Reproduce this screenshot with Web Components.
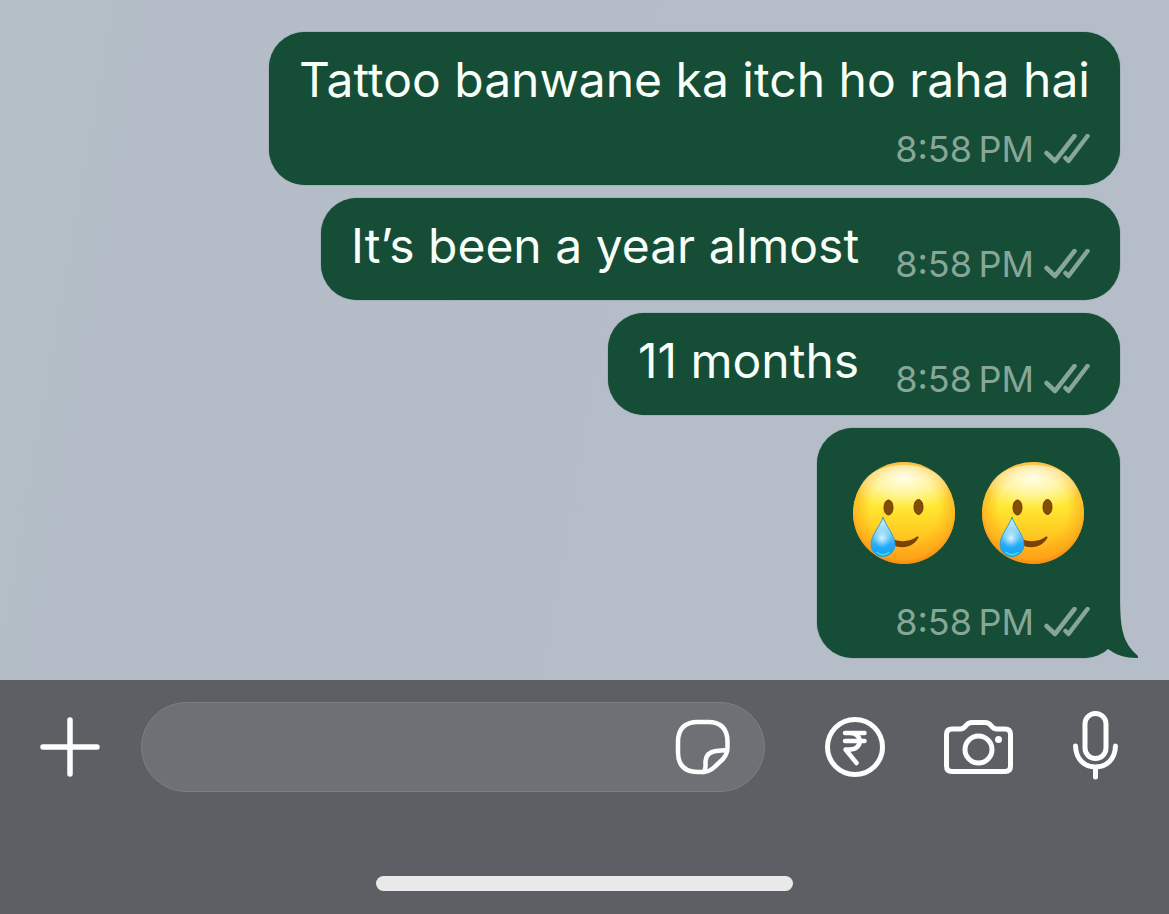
<!DOCTYPE html>
<html lang="en">
<head>
<meta charset="utf-8">
<meta name="viewport" content="width=device-width, initial-scale=1">
<title>Chat</title>
<style>
    body {
        margin: 0;
        font-family: Inter, "Liberation Sans", sans-serif;
        background: #5c6065;
    }
</style>
</head>
<body>
<chat-screen>
    <chat-bubble time="8:58&#8239;PM" stacked>Tattoo banwane ka itch ho raha hai</chat-bubble>
    <chat-bubble time="8:58&#8239;PM">It’s been a year almost</chat-bubble>
    <chat-bubble time="8:58&#8239;PM">11 months</chat-bubble>
    <chat-bubble time="8:58&#8239;PM" stacked tail>
        <tear-emoji></tear-emoji><tear-emoji></tear-emoji>
    </chat-bubble>
    <chat-composer slot="footer"></chat-composer>
</chat-screen>

<script>
class ChatScreen extends HTMLElement {

    constructor() {
        super();
        this.attachShadow({mode:"open"}).innerHTML =
        `
        <style>
        :host {
            display: flex;
            flex-direction: column;
            min-height: 100vh;
        }

        main {
            flex: 1;
            display: flex;
            flex-direction: column;
            align-items: flex-end;
            gap: 13px;
            padding: 32px 49px 22px 24px;
            background: linear-gradient(100deg, #b4bec7, #b4bdc8 60%, #b5bdc8);
        }
        </style>

        <main><slot></slot></main>
        <slot name="footer"></slot>
        `
    }
}

class ChatBubble extends HTMLElement {

    constructor() {
        super();
        this._shadowDOM = this.attachShadow({mode:"open"})
    }

    connectedCallback() {
        this.render();
    }

    render() {
        this._shadowDOM.innerHTML =
        `
        <style>
        :host {
            display: flex;
            align-items: flex-end;
            gap: 7px 36px;
            position: relative;
            padding: 18px 30px 14px;
            border-radius: 36px;
            background: #154d37;
            box-shadow: 0 0 1px #154d37;
            color: #f8fff9;
        }

        :host([stacked]) {
            flex-direction: column;
        }

        .text {
            padding-bottom: 10px;
            font-size: 48px;
            line-height: 60px;
        }

        :host([tail]) .text {
            display: flex;
            gap: 25px;
            padding: 15px 5px 28px;
        }

        .meta {
            display: flex;
            align-items: center;
            gap: 10px;
            color: #87a698;
            font-size: 36px;
            line-height: 44px;
            white-space: nowrap;
        }

        .meta svg {
            display: block;
        }

        .tail {
            position: absolute;
            right: -20px;
            bottom: 0;
        }
        </style>

        <div class="text"><slot></slot></div>
        <div class="meta">
            <time>${this.getAttribute("time")}</time>
            <svg width="46" height="30" viewBox="0 0 46 30" role="img" aria-label="Delivered" fill="none" stroke="currentColor" stroke-width="4.500" stroke-linecap="round" stroke-linejoin="round">
                <path d="M2.500 19L11 27L30.500 2"/>
                <path d="M21.500 24L24.500 27L43.500 2"/>
            </svg>
        </div>
        ${this.hasAttribute("tail") ? `
        <svg class="tail" width="36" height="60" viewBox="0 0 36 60" aria-hidden="true">
            <path fill="#154d37" d="M0 0H16C16 36 21 46 33.500 57.500Q35 59.500 33 60C21 60 12 57 4 51L0 50Z"/>
        </svg>` : ""}
        `
    }
}

class TearEmoji extends HTMLElement {

    constructor() {
        super();
        this.attachShadow({mode:"open"}).innerHTML =
        `
        <style>
        :host {
            display: block;
        }

        svg {
            display: block;
        }
        </style>

        <svg width="104" height="104" viewBox="0 0 104 104" role="img" aria-label="Smiling face with tear">
            <defs>
                <linearGradient id="face" x1="0" y1="0" x2="0" y2="1">
                    <stop offset="0" stop-color="#ffdf6a"/>
                    <stop offset=".2" stop-color="#fff06c"/>
                    <stop offset=".42" stop-color="#ffe932"/>
                    <stop offset=".65" stop-color="#ffd025"/>
                    <stop offset="1" stop-color="#ffa016"/>
                </linearGradient>
                <radialGradient id="rim" cx=".5" cy=".46" r=".54">
                    <stop offset=".62" stop-color="#fda414" stop-opacity="0"/>
                    <stop offset=".9" stop-color="#fda01a" stop-opacity=".6"/>
                    <stop offset="1" stop-color="#f08a14" stop-opacity=".9"/>
                </radialGradient>
                <radialGradient id="shine" cx=".5" cy=".25" r=".65">
                    <stop offset="0" stop-color="#fff" stop-opacity=".85"/>
                    <stop offset=".5" stop-color="#fffde0" stop-opacity=".5"/>
                    <stop offset="1" stop-color="#fff8a0" stop-opacity="0"/>
                </radialGradient>
                <linearGradient id="tear" x1="0" y1="0" x2="0" y2="1">
                    <stop offset="0" stop-color="#d9f4fc"/>
                    <stop offset=".35" stop-color="#8fd6f5"/>
                    <stop offset=".7" stop-color="#26aafa"/>
                    <stop offset="1" stop-color="#12a5f4"/>
                </linearGradient>
                <radialGradient id="glow">
                    <stop offset="0" stop-color="#e5faff" stop-opacity=".9"/>
                    <stop offset="1" stop-color="#bdecff" stop-opacity="0"/>
                </radialGradient>
            </defs>
            <circle cx="52" cy="52" r="51" fill="url(#face)"/>
            <circle cx="52" cy="52" r="51" fill="url(#rim)"/>
            <ellipse cx="52" cy="30" rx="44" ry="26" fill="url(#shine)"/>
            <g fill="#854c08" stroke="#6f3d05">
                <ellipse cx="36.500" cy="46.500" rx="4.500" ry="7.500"/>
                <ellipse cx="66.500" cy="46" rx="4.500" ry="7.500"/>
            </g>
            <path d="M41 78C50 82 59 80 65 75.500Q67.500 75 66 77.500C60 87 49 88 41 84Z" fill="#7a4305"/>
            <path d="M31 56C33 64 43 74 43 83.500A12 12 0 0 1 19 83.500C19 74 29 64 31 56Z" fill="url(#tear)" stroke="#2a9fd8"/>
            <ellipse cx="30" cy="77" rx="9" ry="10" fill="url(#glow)"/>
            <path d="M25 91.500Q31 96 37 91.500" fill="none" stroke="#48dcf5" stroke-width="1.500" stroke-linecap="round"/>
        </svg>
        `
    }
}

class ChatComposer extends HTMLElement {

    constructor() {
        super();
        this.attachShadow({mode:"open"}).innerHTML =
        `
        <style>
        :host {
            display: block;
            padding: 22px 0 23px;
            background: #5c6065;
            color: #fcfdfd;
        }

        .bar, .actions, .field {
            display: flex;
            align-items: center;
        }

        .bar {
            gap: 41px;
            padding: 0 48px 0 40px;
        }

        .field {
            flex: 1;
            min-width: 0;
            box-sizing: border-box;
            height: 90px;
            padding: 0 32px 0 40px;
            border: 1px solid #7b7f83;
            border-radius: 45px;
            background: #6d7175;
        }

        input {
            flex: 1;
            min-width: 0;
            padding: 0;
            border: 0;
            outline: 0;
            background: none;
            color: inherit;
            font: inherit;
            font-size: 48px;
        }

        .actions {
            gap: 59px;
            padding-left: 19px;
        }

        button {
            padding: 0;
            border: 0;
            background: none;
            color: inherit;
            cursor: pointer;
        }

        svg {
            display: block;
            fill: none;
            stroke: currentColor;
            stroke-width: 5;
            stroke-linecap: round;
            stroke-linejoin: round;
        }

        .home {
            width: 417px;
            max-width: 60%;
            height: 15px;
            margin: 84px auto 0;
            border-radius: 8px;
            background: #e9e9e9;
        }
        </style>

        <div class="bar">
            <button type="button" aria-label="Attach">
                <svg width="60" height="60" viewBox="0 0 60 60"><path d="M30 3V57M3 30H57" stroke-width="5.500"/></svg>
            </button>
            <div class="field">
                <input type="text" aria-label="Message">
                <button type="button" aria-label="Stickers">
                    <svg width="58" height="58" viewBox="0 0 58 58">
                        <g stroke-width="4.500">
                            <path d="M24 4H34C47 4 53.500 10.500 53.500 24V29C53.500 34 52.500 37 49 41L41 48.500C37 52.500 34 54 29 54H24C10.500 54 4 47.500 4 34V24C4 10.500 10.500 4 24 4Z"/>
                            <path d="M53 32L42 33C35 34 32 37 31.500 43V48Q31.500 51 30 54"/>
                        </g>
                    </svg>
                </button>
            </div>
            <div class="actions">
                <button type="button" aria-label="Payment">
                    <svg width="60" height="60" viewBox="0 0 60 60">
                        <circle cx="30" cy="30" r="27.500"/>
                        <path d="M20 16H39.500M20 24H39.500M25 16C38 16 38 32.500 25 32.500H20.500L31.500 46" stroke-width="4.500"/>
                    </svg>
                </button>
                <button type="button" aria-label="Camera">
                    <svg width="70" height="60" viewBox="0 0 70 60">
                        <path d="M8 12H16C19 12 20.500 10.500 22 8.500C24 6 25.500 5.500 28 5.500H41C43.500 5.500 45 6 47 8.500C48.500 10.500 50 12 53 12H61Q66.500 12 66.500 17.500V49Q66.500 54.500 61 54.500H8Q2.500 54.500 2.500 49V17.500Q2.500 12 8 12Z"/>
                        <circle cx="34.500" cy="32.500" r="13.500"/>
                        <circle cx="54.500" cy="22.500" r="3.500" fill="currentColor" stroke="none"/>
                    </svg>
                </button>
                <button type="button" aria-label="Voice message">
                    <svg width="48" height="72" viewBox="0 0 48 72">
                        <rect x="12" y="2.500" width="21" height="45" rx="10.500"/>
                        <path d="M2.500 35C3 49 12 56 22.500 56S42 49 42.500 35M22.500 56V66"/>
                    </svg>
                </button>
            </div>
        </div>
        <div class="home"></div>
        `
    }
}

customElements.define("chat-screen",ChatScreen);
customElements.define("chat-bubble",ChatBubble);
customElements.define("tear-emoji",TearEmoji);
customElements.define("chat-composer",ChatComposer);
</script>
</body>
</html>
